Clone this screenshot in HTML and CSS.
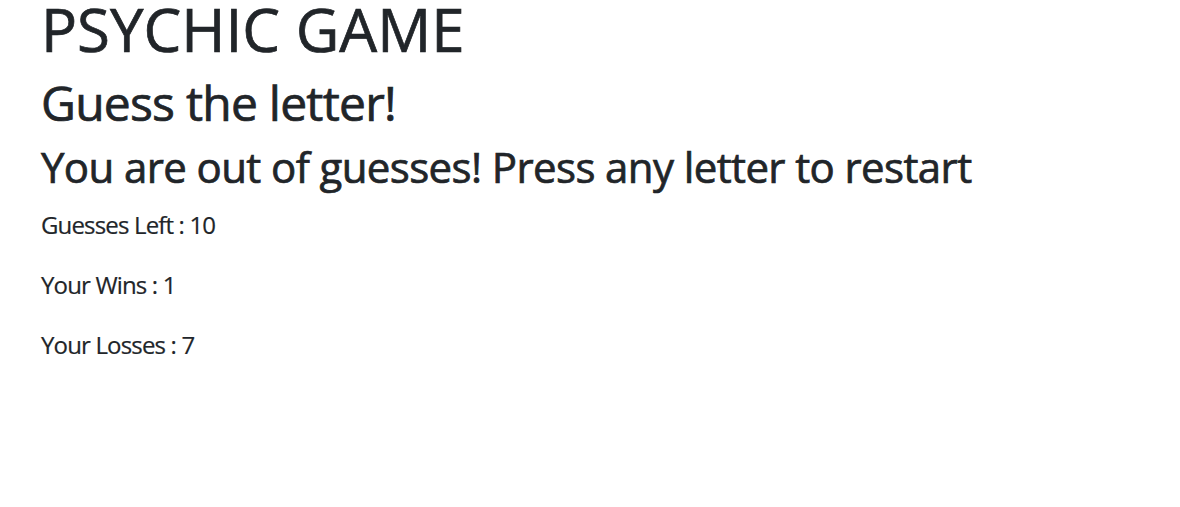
FILE: index.html
```html
<!DOCTYPE html>
<html lang="en">
<head>
<meta charset="utf-8">
<title>Psychic Game</title>
<link rel="stylesheet" href="styles.css">
</head>
<body>
<main class="game">
  <h1 class="title">PSYCHIC GAME</h1>
  <h2 class="subtitle">Guess the letter!</h2>
  <h3 class="status">You are out of guesses! Press any letter to restart</h3>
  <p class="stat">Guesses Left : 10</p>
  <p class="stat">Your Wins : 1</p>
  <p class="stat">Your Losses : 7</p>
</main>
</body>
</html>
```
FILE: styles.css
```css
html, body {
  margin: 0;
  padding: 0;
  background: #ffffff;
}
body {
  font-family: "Open Sans", "Noto Sans", sans-serif;
  color: #212529;
}
.game {
  padding-left: 41px;
}
.title, .subtitle, .status, .stat {
  margin: 0;
  font-weight: 400;
}
.title, .subtitle, .status {
  -webkit-text-stroke: 0.7px #212529;
}
.title {
  font-size: 60px;
  line-height: 58px;
  margin-bottom: 16px;
  letter-spacing: 0;
}
.subtitle {
  font-size: 48px;
  line-height: 58px;
  margin-bottom: 10px;
  letter-spacing: -0.016em;
}
.status {
  font-size: 42px;
  line-height: 50px;
  margin-bottom: 15px;
  letter-spacing: -0.0145em;
}
.stat {
  font-size: 24px;
  line-height: 36px;
  margin-bottom: 24px;
  letter-spacing: -0.035em;
  -webkit-text-stroke: 0.2px #212529;
}
```
